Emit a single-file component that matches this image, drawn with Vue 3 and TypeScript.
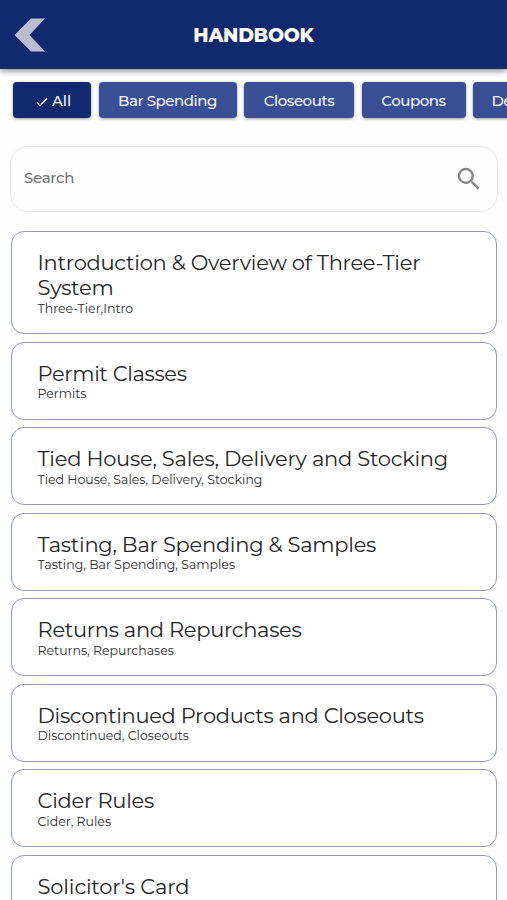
<script setup lang="ts">
interface Chip { label: string; width: number; active?: boolean }
interface Entry { title: string[]; tags: string; tracking: number }

const chips: Chip[] = [
  { label: 'All', width: 78, active: true },
  { label: 'Bar Spending', width: 138 },
  { label: 'Closeouts', width: 110 },
  { label: 'Coupons', width: 104 },
  { label: 'Delivery', width: 95 },
]

const entries: Entry[] = [
  { title: ['Introduction & Overview of Three-Tier', 'System'], tags: 'Three-Tier,Intro', tracking: -0.27 },
  { title: ['Permit Classes'], tags: 'Permits', tracking: -0.34 },
  { title: ['Tied House, Sales, Delivery and Stocking'], tags: 'Tied House, Sales, Delivery, Stocking', tracking: -0.25 },
  { title: ['Tasting, Bar Spending & Samples'], tags: 'Tasting, Bar Spending, Samples', tracking: -0.27 },
  { title: ['Returns and Repurchases'], tags: 'Returns, Repurchases', tracking: -0.3 },
  { title: ['Discontinued Products and Closeouts'], tags: 'Discontinued, Closeouts', tracking: -0.3 },
  { title: ['Cider Rules'], tags: 'Cider, Rules', tracking: -0.25 },
  { title: ["Solicitor's Card"], tags: "Solicitor's, Card", tracking: -0.12 },
]
</script>

<template>
  <div class="page">
    <header class="bar">
      <svg class="back" viewBox="0 0 32 36"><path d="M17 1.500H31L15.500 18 31 34.500H17L.5 18Z" /></svg>
      <h1>HANDBOOK</h1>
    </header>
    <nav class="chips">
      <button v-for="c in chips" :key="c.label" class="chip" :class="{ active: c.active }" :style="{ width: c.width + 'px' }">
        <svg v-if="c.active" class="check" viewBox="0 0 12 10"><path d="M1 5.500 4 8.500 11 1.500" /></svg><span>{{ c.label }}</span>
      </button>
    </nav>
    <div class="search">
      <span>Search</span>
      <svg viewBox="0 0 24 24"><path d="M15.500 14h-.79l-.28-.27A6.471 6.471 0 0 0 16 9.500 6.500 6.500 0 1 0 9.500 16c1.610 0 3.090-.59 4.230-1.570l.27.28v.79l5 4.990L20.490 19l-4.990-5zm-6 0C7.010 14 5 11.990 5 9.500S7.010 5 9.500 5 14 7.010 14 9.500 11.990 14 9.500 14z" /></svg>
    </div>
    <main class="list">
      <article v-for="e in entries" :key="e.tags" class="card">
        <h2 :style="{ letterSpacing: e.tracking + 'px' }"><span v-for="l in e.title" :key="l">{{ l }}</span></h2>
        <p>{{ e.tags }}</p>
      </article>
    </main>
  </div>
</template>

<style>
body { overflow: hidden; background: #fefefe; }
</style>
<style scoped>
.page { height: 900px; overflow: hidden; font-family: Montserrat, Inter, sans-serif; }
.bar { height: 69px; background: #11296f; box-shadow: 0 2px 6px rgba(0,0,0,.45); display: grid; grid-template-columns: 60px 1fr 60px; align-items: center; }
.back { width: 32px; height: 36px; margin-left: 14px; fill: #b9bed0; }
h1 { margin: 0; padding-top: 1px; text-align: center; color: #fff; font-size: 19px; font-weight: 800; letter-spacing: -.25px; }
.chips { display: flex; gap: 7.500px; padding: 13px 0 0 13px; }
.chip { display: flex; align-items: center; justify-content: center; flex: none; height: 36px; border: 0; border-radius: 4px; background: #384f95; color: #f3f5fb; font: 500 15px Montserrat, Inter, sans-serif; letter-spacing: -.45px; padding: 0; box-shadow: 0 1px 3px rgba(0,0,0,.4); }
.chip.active { background: #11296f; padding-left: 3px; letter-spacing: -.1px; }
.check { width: 12px; height: 10px; margin: 3px 4px 0 0; fill: none; stroke: #fff; stroke-width: 1.5; }
.search { margin: 27.500px 9px 0 9.500px; height: 66px; box-sizing: border-box; border: 1px solid #e8e8e8; border-radius: 18px; display: flex; justify-content: space-between; align-items: center; padding: 0 13px 0 13.500px; color: #757575; font-size: 15px; font-weight: 500; letter-spacing: -.3px; }
.search span { padding-bottom: 3px; }
.search svg { width: 30px; height: 30px; fill: #888; }
.list { display: grid; gap: 7.500px; padding: 19px 10px 0 10.500px; }
.card { box-sizing: border-box; border: 1px solid #9499c2; border-radius: 13px; padding: 18px 26px 17.450px; background: #fff; }
h2 { margin: 0; font-weight: 450; font-size: 21px; line-height: 25.600px; color: #252525; }
h2 span { display: block; white-space: nowrap; }
p { margin: 0; padding-top: 1px; font-size: 12.500px; line-height: 14px; font-weight: 450; color: #2d2d2d; white-space: nowrap; }
</style>
